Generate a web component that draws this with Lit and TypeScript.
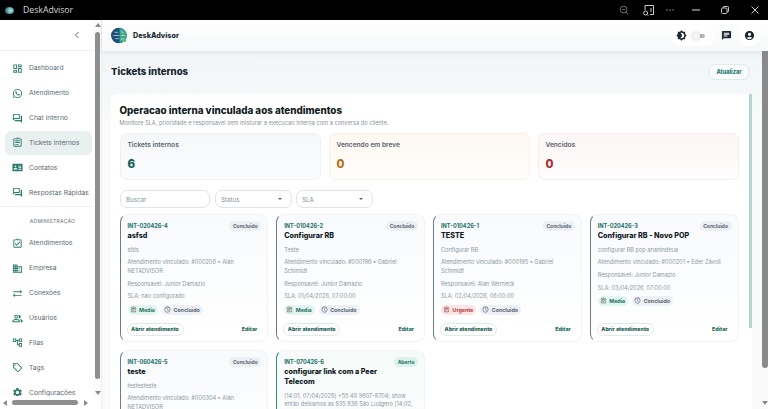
import { LitElement, html, css, svg } from "lit";
import { customElement } from "lit/decorators.js";

const P: Record<string, string> = {
  dash: "M19 5v2h-4V5h4M9 5v6H5V5h4m10 8v6h-4v-6h4M9 17v2H5v-2h4M21 3h-8v6h8V3zM11 3H3v10h8V3zm10 8h-8v10h8V11zM11 15H3v6h8v-6z",
  wa: "M16.75 13.96c.25.13.41.2.46.3.06.11.04.61-.21 1.18-.2.56-1.24 1.1-1.7 1.12-.46.02-.47.36-2.96-.73-2.49-1.09-3.99-3.75-4.11-3.92-.12-.17-.96-1.38-.92-2.61.05-1.22.69-1.8.95-2.04.24-.26.51-.29.68-.26h.47c.15 0 .36-.06.55.45l.69 1.87c.06.13.1.28.01.44l-.27.41-.39.42c-.12.12-.26.25-.12.5.12.26.62 1.09 1.32 1.78.91.88 1.71 1.17 1.95 1.3.24.14.39.12.54-.04l.81-.94c.19-.25.35-.19.58-.11l1.67.88M12 2a10 10 0 0 1 10 10 10 10 0 0 1-10 10c-1.97 0-3.8-.57-5.35-1.55L2 22l1.55-4.65A9.969 9.969 0 0 1 2 12 10 10 0 0 1 12 2m0 2a8 8 0 0 0-8 8c0 1.72.54 3.31 1.46 4.61L4.5 19.5l2.89-.96A7.95 7.95 0 0 0 12 20a8 8 0 0 0 8-8 8 8 0 0 0-8-8z",
  forum: "M15 4v7H5.17L4 12.17V4h11m1-2H3c-.55 0-1 .45-1 1v14l4-4h10c.55 0 1-.45 1-1V3c0-.55-.45-1-1-1zm5 4h-2v9H6v2c0 .55.45 1 1 1h11l4 4V7c0-.55-.45-1-1-1z",
  assign: "M7 15h7v2H7zm0-4h10v2H7zm0-4h10v2H7zm12-4h-4.18C14.4 1.84 13.3 1 12 1c-1.3 0-2.4.84-2.82 2H5c-.14 0-.27.01-.4.04-.39.08-.74.28-1.01.55-.18.18-.33.4-.43.64-.1.23-.16.49-.16.77v14c0 .27.06.54.16.78s.25.45.43.64c.27.27.62.47 1.01.55.13.02.26.03.4.03h14c1.1 0 2-.9 2-2V5c0-1.1-.9-2-2-2zm-7-.25c.41 0 .75.34.75.75s-.34.75-.75.75-.75-.34-.75-.75.34-.75.75-.75zM19 19H5V5h14v14z",
  contacts: "M1 4h22v16H1zM7.5 7.5a2 2 0 1 0 0 4 2 2 0 0 0 0-4zM3.5 16.5h8v-1.2c0-1.6-2.6-2.4-4-2.4s-4 .8-4 2.4zM14 8v2h6V8zM14 11.5v2h6v-2zM14 15v2h6v-2z",
  done: "M18 9l-1.41-1.42L10 14.17l-2.59-2.58L6 13l4 4zm1-6h-4.18C14.4 1.84 13.3 1 12 1c-1.3 0-2.4.84-2.82 2H5c-.14 0-.27.01-.4.04-.39.08-.74.28-1.01.55-.18.18-.33.4-.43.64-.1.23-.16.49-.16.77v14c0 .27.06.54.16.78s.25.45.43.64c.27.27.62.47 1.01.55.13.02.26.03.4.03h14c1.1 0 2-.9 2-2V5c0-1.1-.9-2-2-2zm-7-.25c.41 0 .75.34.75.75s-.34.75-.75.75-.75-.34-.75-.75.34-.75.75-.75zM19 19H5V5h14v14z",
  biz: "M12 7V3H2v18h20V7H12zM6 19H4v-2h2v2zm0-4H4v-2h2v2zm0-4H4V9h2v2zm0-4H4V5h2v2zm4 12H8v-2h2v2zm0-4H8v-2h2v2zm0-4H8V9h2v2zm0-4H8V5h2v2zm10 12h-8v-2h2v-2h-2v-2h2v-2h-2V9h8v10zm-2-8h-2v2h2v-2zm0 4h-2v2h2v-2z",
  sync: "M22 8l-4-4v3H3v2h15v3l4-4zM2 16l4 4v-3h15v-2H6v-3l-4 4z",
  people: "M16.67 13.13C18.04 14.06 19 15.32 19 17v3h4v-3c0-2.18-3.57-3.47-6.33-3.87zM15 12c2.21 0 4-1.79 4-4s-1.79-4-4-4c-.47 0-.91.1-1.33.24C14.5 5.27 15 6.58 15 8s-.5 2.73-1.33 3.76c.42.14.86.24 1.33.24zM9 12c2.21 0 4-1.79 4-4s-1.79-4-4-4-4 1.79-4 4 1.79 4 4 4zm0-6c1.1 0 2 .9 2 2s-.9 2-2 2-2-.9-2-2 .9-2 2-2zM9 13c-2.67 0-8 1.34-8 4v3h16v-3c0-2.66-5.33-4-8-4zm6 5H3v-.99C3.2 16.29 6.3 15 9 15s5.8 1.29 6 2v1z",
  tree: "M22 11V3h-7v3H9V3H2v8h7V8h2v10h4v3h7v-8h-7v3h-2V8h2v3h7zM7 9H4V5h3v4zm10 6h3v4h-3v-4zm0-10h3v4h-3V5z",
  tag: "M21.41 11.58l-9-9C12.05 2.22 11.55 2 11 2H4c-1.1 0-2 .9-2 2v7c0 .55.22 1.05.59 1.42l9 9c.36.36.86.58 1.41.58s1.05-.22 1.41-.59l7-7c.37-.36.59-.86.59-1.41s-.23-1.06-.59-1.42zM13 20.01L4 11V4h7v-.01l9 9-7 7.02z M6.5 5A1.5 1.5 0 1 0 6.5 8 1.5 1.5 0 1 0 6.5 5z",
  gear: "M19.14 12.94c.04-.3.06-.61.06-.94 0-.32-.02-.64-.07-.94l2.03-1.58c.18-.14.23-.41.12-.61l-1.92-3.32c-.12-.22-.37-.29-.59-.22l-2.39.96c-.5-.38-1.03-.7-1.62-.94l-.36-2.54c-.04-.24-.24-.41-.48-.41h-3.84c-.24 0-.43.17-.47.41l-.36 2.54c-.59.24-1.13.57-1.62.94l-2.39-.96c-.22-.08-.47 0-.59.22L2.74 8.87c-.12.21-.08.47.12.61l2.03 1.58c-.05.3-.09.63-.09.94s.02.64.07.94l-2.03 1.58c-.18.14-.23.41-.12.61l1.92 3.32c.12.22.37.29.59.22l2.39-.96c.5.38 1.03.7 1.62.94l.36 2.54c.05.24.24.41.48.41h3.84c.24 0 .44-.17.47-.41l.36-2.54c.59-.24 1.13-.56 1.62-.94l2.39.96c.22.08.47 0 .59-.22l1.92-3.32c.12-.22.07-.47-.12-.61l-2.01-1.58zM12 15.6c-1.98 0-3.6-1.62-3.6-3.6s1.62-3.6 3.6-3.6 3.6 1.62 3.6 3.6-1.62 3.6-3.6 3.6z",
  clock: "M11.99 2C6.47 2 2 6.48 2 12s4.47 10 9.99 10C17.52 22 22 17.52 22 12S17.52 2 11.99 2zM12 20c-4.42 0-8-3.58-8-8s3.58-8 8-8 8 3.58 8 8-3.58 8-8 8zm.5-13H11v6l5.25 3.15.75-1.23-4.5-2.67z",
  account: "M12 2C6.48 2 2 6.48 2 12s4.48 10 10 10 10-4.48 10-10S17.52 2 12 2zm0 4c1.93 0 3.5 1.57 3.5 3.5S13.93 13 12 13s-3.5-1.57-3.5-3.5S10.07 6 12 6zm0 14c-2.03 0-4.43-.82-6.14-2.88C7.55 15.8 9.68 15 12 15s4.45.8 6.14 2.12C16.43 19.18 14.03 20 12 20z",
  chat: "M20 2H4c-1.1 0-1.99.9-1.99 2L2 22l4-4h14c1.1 0 2-.9 2-2V4c0-1.1-.9-2-2-2zM6 9h12v2H6V9zm8 5H6v-2h8v2zm4-6H6V6h12v2z",
  bright: "M20 8.69V4h-4.69L12 .69 8.69 4H4v4.69L.69 12 4 15.31V20h4.69L12 23.31 15.31 20H20v-4.69L23.31 12 20 8.69zM12 18c-.89 0-1.74-.2-2.5-.55C11.56 16.5 13 14.42 13 12s-1.44-4.5-3.5-5.45C10.26 6.2 11.11 6 12 6c3.31 0 6 2.69 6 6s-2.69 6-6 6z",
};

const icon = (n: string, s: number, c: string) =>
  html`<svg class="ic" width=${s} height=${s} viewBox="0 0 24 24" fill=${c} fill-rule="evenodd">${svg`<path d=${P[n]}></path>`}</svg>`;

const logo = (s: number) => html`<svg class="ic" width=${s} height=${s} viewBox="0 0 24 24">${svg`
  <circle cx="11" cy="12" r="11" fill="#1d4f7c"></circle>
  <path d="M12 1.5a10.5 10.5 0 0 1 0 21z" fill="#3ea889"></path>
  <path d="M5 7.5h5M3.5 12h8M6 16.5h5M14 6l4 3M14 12h6M14 18l4-2" stroke="#d6f0e6" stroke-width="1" fill="none"></path>
  <circle cx="19" cy="19" r="2.5" fill="#5cc48a"></circle>`}</svg>`;

const navTop = [
  ["dash", "Dashboard"], ["wa", "Atendimento"], ["forum", "Chat interno"],
  ["assign", "Tickets internos", 1], ["contacts", "Contatos"], ["forum", "Respostas Rápidas"],
];
const navAdmin = [
  ["done", "Atendimentos"], ["biz", "Empresa"], ["sync", "Conexões"],
  ["people", "Usuários"], ["tree", "Filas"], ["tag", "Tags"], ["gear", "Configurações"],
];

type T = { code: string; status: string; title: string; desc: string; link: string; resp?: string; sla?: string; pri?: string; open?: boolean };
const tickets: T[] = [
  { code: "INT-020426-4", status: "Concluido", title: "asfsd", desc: "sfds", link: "Atendimento vinculado: #000206 • Alan NETADVISOR", resp: "Responsavel: Junior Damazio", sla: "SLA: nao configurado", pri: "Media" },
  { code: "INT-010426-2", status: "Concluido", title: "Configurar RB", desc: "Teste", link: "Atendimento vinculado: #000196 • Gabriel Schimidt", resp: "Responsavel: Junior Damazio", sla: "SLA: 01/04/2026, 07:00:00", pri: "Media" },
  { code: "INT-010426-1", status: "Concluido", title: "TESTE", desc: "Configurar RB", link: "Atendimento vinculado: #000195 • Gabriel Schimidt", resp: "Responsavel: Alan Werneck", sla: "SLA: 02/04/2026, 06:00:00", pri: "Urgente" },
  { code: "INT-020426-3", status: "Concluido", title: "Configurar RB - Novo POP", desc: "configurar RB pop ananindeua", link: "Atendimento vinculado: #000201 • Eder Závoli", resp: "Responsavel: Junior Damazio", sla: "SLA: 03/04/2026, 07:00:00", pri: "Media" },
  { code: "INT-060426-5", status: "Concluido", title: "teste", desc: "testesteste", link: "Atendimento vinculado: #000304 • Alan NETADVISOR", resp: "Responsavel: Junior Damazio", sla: "SLA: nao configurado", pri: "Media" },
  { code: "INT-070426-6", status: "Aberto", title: "configurar link com a Peer Telecom", desc: "[14:01, 07/04/2026] +55 48 9607-8704: show então deixamos as 835 836 São Ludgero [14:02, 07/04/2026]", link: "Atendimento vinculado: #000310", open: true },
];

@customElement("app-root")
export class AppRoot extends LitElement {
  static styles = css`
    :host { display: block; width: 768px; height: 409px; overflow: hidden; font-family: Inter, "Liberation Sans", sans-serif; background: #fff; }
    * { box-sizing: border-box; }
    .ic { display: block; flex: none; }
    .titlebar { height: 20px; background: #000; color: #d8d8d8; display: flex; align-items: center; font: 400 8.7px "Open Sans", sans-serif; }
    .tb-logo { margin: 0 9px 0 5px; width: 9px; height: 7px; border-radius: 50%; background: radial-gradient(circle at 60% 50%, #bfeadf, #2f7f8e 70%); }
    .tb-right { margin-left: auto; display: flex; align-items: center; }
    .tb-right svg { display: block; }
    .body { display: flex; height: 389px; }
    .side { width: 102px; flex: none; display: flex; flex-direction: column; background: #fff; border-right: 1px solid #eef1f3; }
    .side-top { flex: 1; min-height: 0; display: flex; }
    .side-col { width: 95px; overflow: hidden; }
    .collapse { height: 31px; display: flex; align-items: center; justify-content: flex-end; padding-right: 14px; border-bottom: 1px solid #eef1f3; }
    .nav { padding-top: 5px; }
    .item { height: 24.85px; margin: 0 2px 0 5px; padding-left: 7px; display: flex; align-items: center; gap: 6px; border-radius: 6px; font-size: 6.7px; color: #5d6a72; white-space: nowrap; }
    .item.sel { background: #e8f1ef; }
    .adm-sep { border-top: 1px solid #eef1f3; margin-top: 1px; height: 25px; display: flex; align-items: center; justify-content: center; font-size: 5px; letter-spacing: .25px; color: #7b858c; font-weight: 500; padding: 4px 0 0 11px; }
    .vbar { width: 7px; flex: none; display: flex; flex-direction: column; align-items: center; background: #fbfbfb; }
    .vbar .arrow-u { margin-top: 3px; border: 3px solid transparent; border-top: 0; border-bottom: 4px solid #8a8a8a; }
    .vbar .thumb { width: 5px; margin-top: 5px; height: 347px; border-radius: 3px; background: #8e8e8e; }
    .vbar .arrow-d { margin-top: 12px; border: 3px solid transparent; border-bottom: 0; border-top: 4px solid #8a8a8a; }
    .hbar { height: 13px; width: 100%; display: flex; align-items: center; padding: 0 3px; flex: none; background: #fff; }
    .hbar i { display: block; border: 3px solid transparent; }
    .hbar .al { border-left: 0; border-right: 4px solid #8a8a8a; }
    .hbar .ar { border-right: 0; border-left: 4px solid #8a8a8a; margin-left: 6px; }
    .hbar .th { width: 66px; height: 5px; margin-left: 5px; border-radius: 3px; background: #8e8e8e; }
    .main { flex: 1; min-width: 0; display: flex; flex-direction: column; }
    .topbar { height: 31px; flex: none; background: linear-gradient(#fff, #f6f8f9); display: flex; align-items: center; padding: 0 9px 0 8.5px; gap: 5.5px; box-shadow: 0 1px 5px rgba(40,60,80,.1); position: relative; z-index: 1; }
    .brand { font-size: 7.2px; font-weight: 800; color: #1d2a33; }
    .top-r { margin-left: auto; display: flex; align-items: center; }
    .pill { background: #fff; border-radius: 8px; height: 21px; display: flex; align-items: center; }
    .toggle { width: 42px; padding-left: 3.5px; gap: 4px; }
    .sw { position: relative; width: 12px; height: 4px; border-radius: 2px; background: #b5b5b5; margin-left: 2px; }
    .sw::before { content: ""; position: absolute; left: -1px; top: -2px; width: 8px; height: 8px; border-radius: 50%; background: #f4f4f4; box-shadow: 0 0 2px rgba(0,0,0,.25); }
    .chatb { width: 25px; justify-content: center; background: none; }
    .acc { width: 20px; justify-content: center; }
    .content-wrap { flex: 1; min-height: 0; display: flex; }
    .content { flex: 1; min-width: 0; overflow: hidden; background: linear-gradient(#f1f5f7, #f8fafb 20%); padding: 13px 10px 0 9px; }
    .page-head { display: flex; align-items: center; justify-content: space-between; height: 16px; padding-right: 3px; }
    .page-head h1 { margin: -2px 0 0; font-size: 9.6px; font-weight: 800; color: #18242c; }
    .upd { height: 16px; width: 40px; border: 1px solid #dfecea; border-radius: 6px; background: #f9fcfc; color: #2b7a6c; font-size: 5.6px; font-weight: 800; display: flex; align-items: center; justify-content: center; }
    .panel { margin-top: 14px; height: 340px; background: #fff; border-radius: 6px 0 0 0; display: flex; }
    .panel-in { flex: 1; min-width: 0; padding: 10px 10px 0 8.5px; overflow: hidden; }
    .pbar { width: 3px; flex: none; align-self: flex-start; height: 234px; background: #b4d6d0; }
    h2 { margin: 0; font-size: 9.8px; line-height: 13px; font-weight: 800; color: #111b22; }
    .sub { font-size: 5.7px; line-height: 8px; color: #8b959c; margin-top: 2px; }
    .stats { display: grid; grid-template-columns: repeat(3, 1fr); gap: 7.5px; margin-top: 6px; }
    .stat { height: 47px; border: 1px solid #eef1f4; border-radius: 7px; padding: 7px 7px 0; }
    .stat b { display: block; font-size: 6.6px; line-height: 9px; font-weight: 600; color: #59646d; }
    .stat span { display: block; font-size: 11.5px; line-height: 14px; font-weight: 800; margin-top: 7px; }
    .s1 { background: linear-gradient(#f5f8fa, #fbfcfd); } .s1 span { color: #0f5f55; }
    .s2 { background: linear-gradient(#fdf8f2, #fefdfb); border-color: #f8f2ea; } .s2 span { color: #b4731c; }
    .s3 { background: linear-gradient(#fcf6f6, #fefcfc); border-color: #f6eeee; } .s3 span { color: #a83232; }
    .filters { display: flex; gap: 4px; margin-top: 10px; }
    .field { height: 18px; border: 1px solid #dfe4e8; border-radius: 7px; font-size: 6.2px; color: #87919a; display: flex; align-items: center; padding: 0 5.5px; justify-content: space-between; }
    .f1 { width: 90.5px; margin-right: .5px; } .f2 { width: 77px; }
    .caret { width: 0; height: 0; border: 2px solid transparent; border-bottom: 0; border-top: 2.5px solid #5c666e; margin-right: 3px; }
    .grid { display: grid; grid-template-columns: repeat(4, 1fr); gap: 8px; margin-top: 6px; width: 619px; }
    .card { border: 1px solid #f1f3f6; border-left: 1.5px solid #6d7a88; border-radius: 8px; padding: 7px 6px 5.5px 7px; background: linear-gradient(#f8fafc, #fff); min-height: 128px; display: flex; flex-direction: column; }
    .card.open { border-left-color: #2f8f7c; background: linear-gradient(#f6fbfa, #fff); }
    .c-head { display: flex; justify-content: space-between; align-items: flex-start; gap: 4px; }
    .c-left { min-width: 0; }
    .code { display: block; font-size: 5.6px; line-height: 9px; font-weight: 700; color: #1c6f64; }
    .badge { flex: none; font-size: 5px; font-weight: 700; height: 9.5px; margin-top: -1px; border-radius: 5px; padding: 0 3.5px; background: #eceff3; color: #5d6773; display: flex; align-items: center; }
    .badge.op { background: #def2ec; color: #1e7565; }
    .title { font-size: 7.2px; line-height: 10px; font-weight: 800; color: #11181e; }
    .txt { font-size: 5.6px; line-height: 8.7px; color: #8f989f; margin-top: 4px; }
    .txt.first { margin-top: 4.5px; }
    .chips { display: flex; gap: 4px; margin-top: 3.5px; }
    .chip { height: 10px; border-radius: 5px; display: flex; align-items: center; gap: 2.5px; padding: 0 3px 0 2px; font-size: 5.3px; font-weight: 700; }
    .chip.m { background: #e4f4ef; color: #1c7565; }
    .chip.u { background: #fbe6e6; color: #b23b3b; }
    .chip.c { background: #edf0f5; color: #5b6672; }
    .actions { margin-top: auto; display: flex; justify-content: space-between; align-items: center; padding-right: 4px; }
    .btn { height: 13px; width: 57px; margin-left: -1px; border: 1px solid #e3e9e9; border-radius: 7px; background: #fff; font-size: 5.3px; font-weight: 800; color: #1a5f54; display: flex; align-items: center; justify-content: center; }
    .edit { font-size: 5.3px; font-weight: 800; color: #1a6b5d; }
    .mbar { width: 6px; flex: none; background: #fafafa; display: flex; flex-direction: column; align-items: center; }
    .mbar .thumb { width: 6px; height: 317px; background: #8a8a8a; border-radius: 0 0 3px 3px; }
    .mbar .arrow-d { margin-top: 33px; border: 3px solid transparent; border-bottom: 0; border-top: 4px solid #8a8a8a; }
  `;

  private nav(list: any[]) {
    return list.map(([i, t, s]) => html`<div class="item ${s ? "sel" : ""}">${icon(i, 11, "#2a7a6d")}<span>${t}</span></div>`);
  }

  private card(t: T) {
    return html`<div class="card ${t.open ? "open" : ""}">
      <div class="c-head">
        <div class="c-left"><span class="code">${t.code}</span><div class="title">${t.title}</div></div>
        <span class="badge ${t.open ? "op" : ""}">${t.status}</span>
      </div>
      <div class="txt first">${t.desc}</div>
      <div class="txt">${t.link}</div>
      ${t.resp ? html`<div class="txt">${t.resp}</div>` : ""}
      ${t.sla ? html`<div class="txt">${t.sla}</div>` : ""}
      ${t.pri ? html`<div class="chips">
        <span class="chip ${t.pri === "Urgente" ? "u" : "m"}">${icon("assign", 7, t.pri === "Urgente" ? "#9c5a5a" : "#5f7a74")}${t.pri}</span>
        <span class="chip c">${icon("clock", 7, "#5b6672")}Concluido</span>
      </div>` : ""}
      <div class="actions"><span class="btn">Abrir atendimento</span><span class="edit">Editar</span></div>
    </div>`;
  }

  render() {
    return html`
      <div class="titlebar">
        <div class="tb-logo"></div><span>DeskAdvisor</span>
        <div class="tb-right">
          <svg width="10" height="10" viewBox="0 0 10 10" fill="none" stroke="#8a8a8a" stroke-width=".8"><circle cx="4.6" cy="4.6" r="3.4"></circle><path d="M7 7l2 2M3 4.6h3"></path></svg>
          <svg style="margin-left:13px" width="13" height="13" viewBox="0 0 13 13" fill="none" stroke="#e4e4e4" stroke-width=".9"><path d="M3 6V1.5h8.5v9H8"></path><path d="M9 4v4"></path><circle cx="3.6" cy="9" r="2"></circle><path d="M5 10.5l1.2 1.2"></path></svg>
          <svg style="margin-left:11px" width="8" height="2" viewBox="0 0 8 2" fill="#a8a8a8"><circle cx="1" cy="1" r=".7"></circle><circle cx="4" cy="1" r=".7"></circle><circle cx="7" cy="1" r=".7"></circle></svg>
          <svg style="margin-left:18px" width="8" height="2" viewBox="0 0 8 2"><path d="M0 1h8" stroke="#e0e0e0" stroke-width="1"></path></svg>
          <svg style="margin-left:21px" width="8" height="8" viewBox="0 0 8 8" fill="none" stroke="#d8d8d8" stroke-width=".9"><rect x=".5" y="2" width="5.5" height="5.5" rx="1"></rect><path d="M2.2 2V1.2a.7.7 0 0 1 .7-.7h3.9a.7.7 0 0 1 .7.7v3.9a.7.7 0 0 1-.7.7H6"></path></svg>
          <svg style="margin-left:22px;margin-right:9px" width="8" height="8" viewBox="0 0 8 8" stroke="#e6e6e6" stroke-width=".9"><path d="M.5.5l7 7M7.5.5l-7 7"></path></svg>
        </div>
      </div>
      <div class="body">
        <aside class="side">
          <div class="side-top">
            <div class="side-col">
              <div class="collapse"><svg width="6" height="8" viewBox="0 0 6 8" fill="none" stroke="#666" stroke-width="1"><path d="M4.5 1L1.5 4l3 3"></path></svg></div>
              <div class="nav">${this.nav(navTop)}
                <div class="adm-sep">ADMINISTRAÇÃO</div>
                ${this.nav(navAdmin)}
              </div>
            </div>
            <div class="vbar"><i class="arrow-u"></i><div class="thumb"></div><i class="arrow-d"></i></div>
          </div>
          <div class="hbar"><i class="al"></i><div class="th"></div><i class="ar"></i></div>
        </aside>
        <div class="main">
          <div class="topbar">
            ${logo(17)}<span class="brand">DeskAdvisor</span>
            <div class="top-r">
              <div class="pill toggle">${icon("bright", 11, "#1c2730")}<div class="sw"></div></div>
              <div class="pill chatb">${icon("chat", 11, "#1c2730")}</div>
              <div class="pill acc">${icon("account", 11, "#1c2730")}</div>
            </div>
          </div>
          <div class="content-wrap">
            <div class="content">
              <div class="page-head"><h1>Tickets internos</h1><span class="upd">Atualizar</span></div>
              <div class="panel">
                <div class="panel-in">
                  <h2>Operacao interna vinculada aos atendimentos</h2>
                  <div class="sub">Monitore SLA, prioridade e responsavel sem misturar a execucao interna com a conversa do cliente.</div>
                  <div class="stats">
                    <div class="stat s1"><b>Tickets internos</b><span>6</span></div>
                    <div class="stat s2"><b>Vencendo em breve</b><span>0</span></div>
                    <div class="stat s3"><b>Vencidos</b><span>0</span></div>
                  </div>
                  <div class="filters">
                    <div class="field f1">Buscar</div>
                    <div class="field f2">Status<i class="caret"></i></div>
                    <div class="field f2">SLA<i class="caret"></i></div>
                  </div>
                  <div class="grid">${tickets.map((t) => this.card(t))}</div>
                </div>
                <div class="pbar"></div>
              </div>
            </div>
            <div class="mbar"><div class="thumb"></div><i class="arrow-d"></i></div>
          </div>
        </div>
      </div>
    `;
  }
}
